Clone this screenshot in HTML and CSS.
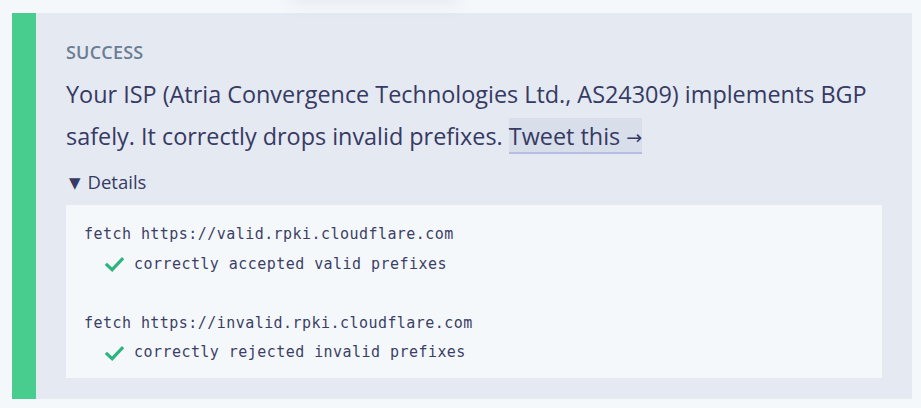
FILE: index.html
```html
<!DOCTYPE html>
<html>
<head>
<meta charset="utf-8">
<link rel="stylesheet" href="styles.css">
</head>
<body>
<div class="top-shadow"></div>
<section class="card">
  <div class="bar"></div>
  <div class="content">
    <div class="label">SUCCESS</div>
    <p class="message">Your ISP (Atria Convergence Technologies Ltd., AS24309) implements BGP safely. It correctly drops invalid prefixes. <a class="tweet" href="#">Tweet this <span class="arrow">→</span></a></p>
    <details open>
      <summary>Details</summary>
      <div class="code">
        <div class="line">fetch https://valid.rpki.cloudflare.com</div>
        <div class="line result"><svg class="check" viewBox="0 0 20 16"><path d="M2 8.5 L7.5 13.5 L18 2.5" fill="none" stroke="currentColor" stroke-width="3.4" stroke-linecap="square" stroke-linejoin="miter"/></svg><span>correctly accepted valid prefixes</span></div>
        <div class="line blank"></div>
        <div class="line">fetch https://invalid.rpki.cloudflare.com</div>
        <div class="line result"><svg class="check" viewBox="0 0 20 16"><path d="M2 8.5 L7.5 13.5 L18 2.5" fill="none" stroke="currentColor" stroke-width="3.4" stroke-linecap="square" stroke-linejoin="miter"/></svg><span>correctly rejected invalid prefixes</span></div>
      </div>
    </details>
  </div>
</section>
</body>
</html>
```

FILE: styles.css
```css
html, body {
  margin: 0;
  padding: 0;
}
body {
  background: #f5f8fb;
  padding: 13px 9px 0 12px;
  height: 408px;
  box-sizing: border-box;
  overflow: hidden;
  font-family: "Open Sans", "Noto Sans", sans-serif;
  position: relative;
}
.top-shadow {
  position: absolute;
  left: 290px;
  top: -30px;
  width: 170px;
  height: 30px;
  box-shadow: 0 4px 18px rgba(60, 70, 110, 0.08);
}
.card {
  display: flex;
  height: 386px;
  background: #e5e9f1;
}
.bar {
  width: 24px;
  flex: none;
  background: #48cd8f;
}
.content {
  flex: 1;
  padding: 27px 30px 0 30px;
}
.label {
  font-size: 18px;
  font-weight: 600;
  line-height: 24px;
  color: #6b7d93;
  letter-spacing: 0.2px;
}
.message {
  margin: 9px 0 0 0;
  font-size: 23.4px;
  line-height: 42px;
  color: #363a64;
}
.tweet {
  color: #363a64;
  text-decoration: none;
  background: #d9deeb;
  border-bottom: 2px solid #b6bde5;
  padding: 2px 0 0 0;
}
.arrow {
  font-family: "DejaVu Sans", sans-serif;
  font-size: 19px;
  vertical-align: 1px;
}
details {
  margin-top: 11px;
  color: #363a64;
}
summary {
  font-size: 18.5px;
  line-height: 26px;
  cursor: pointer;
  list-style: none;
}
summary::-webkit-details-marker { display: none; }
summary::before {
  content: "▼";
  font-family: "DejaVu Sans", sans-serif;
  font-size: 15px;
  margin: 0 7px 0 3px;
  vertical-align: 1px;
}
.code {
  margin-top: 9px;
  background: #f5f8fb;
  padding: 15px 18px 10px 18px;
  font-family: "DejaVu Sans Mono", monospace;
  font-size: 15px;
  letter-spacing: 0.45px;
  color: #3b3f66;
}
.line {
  height: 29.6px;
  line-height: 29.6px;
  white-space: pre;
}
.result {
  display: flex;
  align-items: center;
  padding-left: 21px;
}
.check {
  width: 19px;
  height: 15px;
  color: #2fb47f;
  margin-right: 10px;
}
```
